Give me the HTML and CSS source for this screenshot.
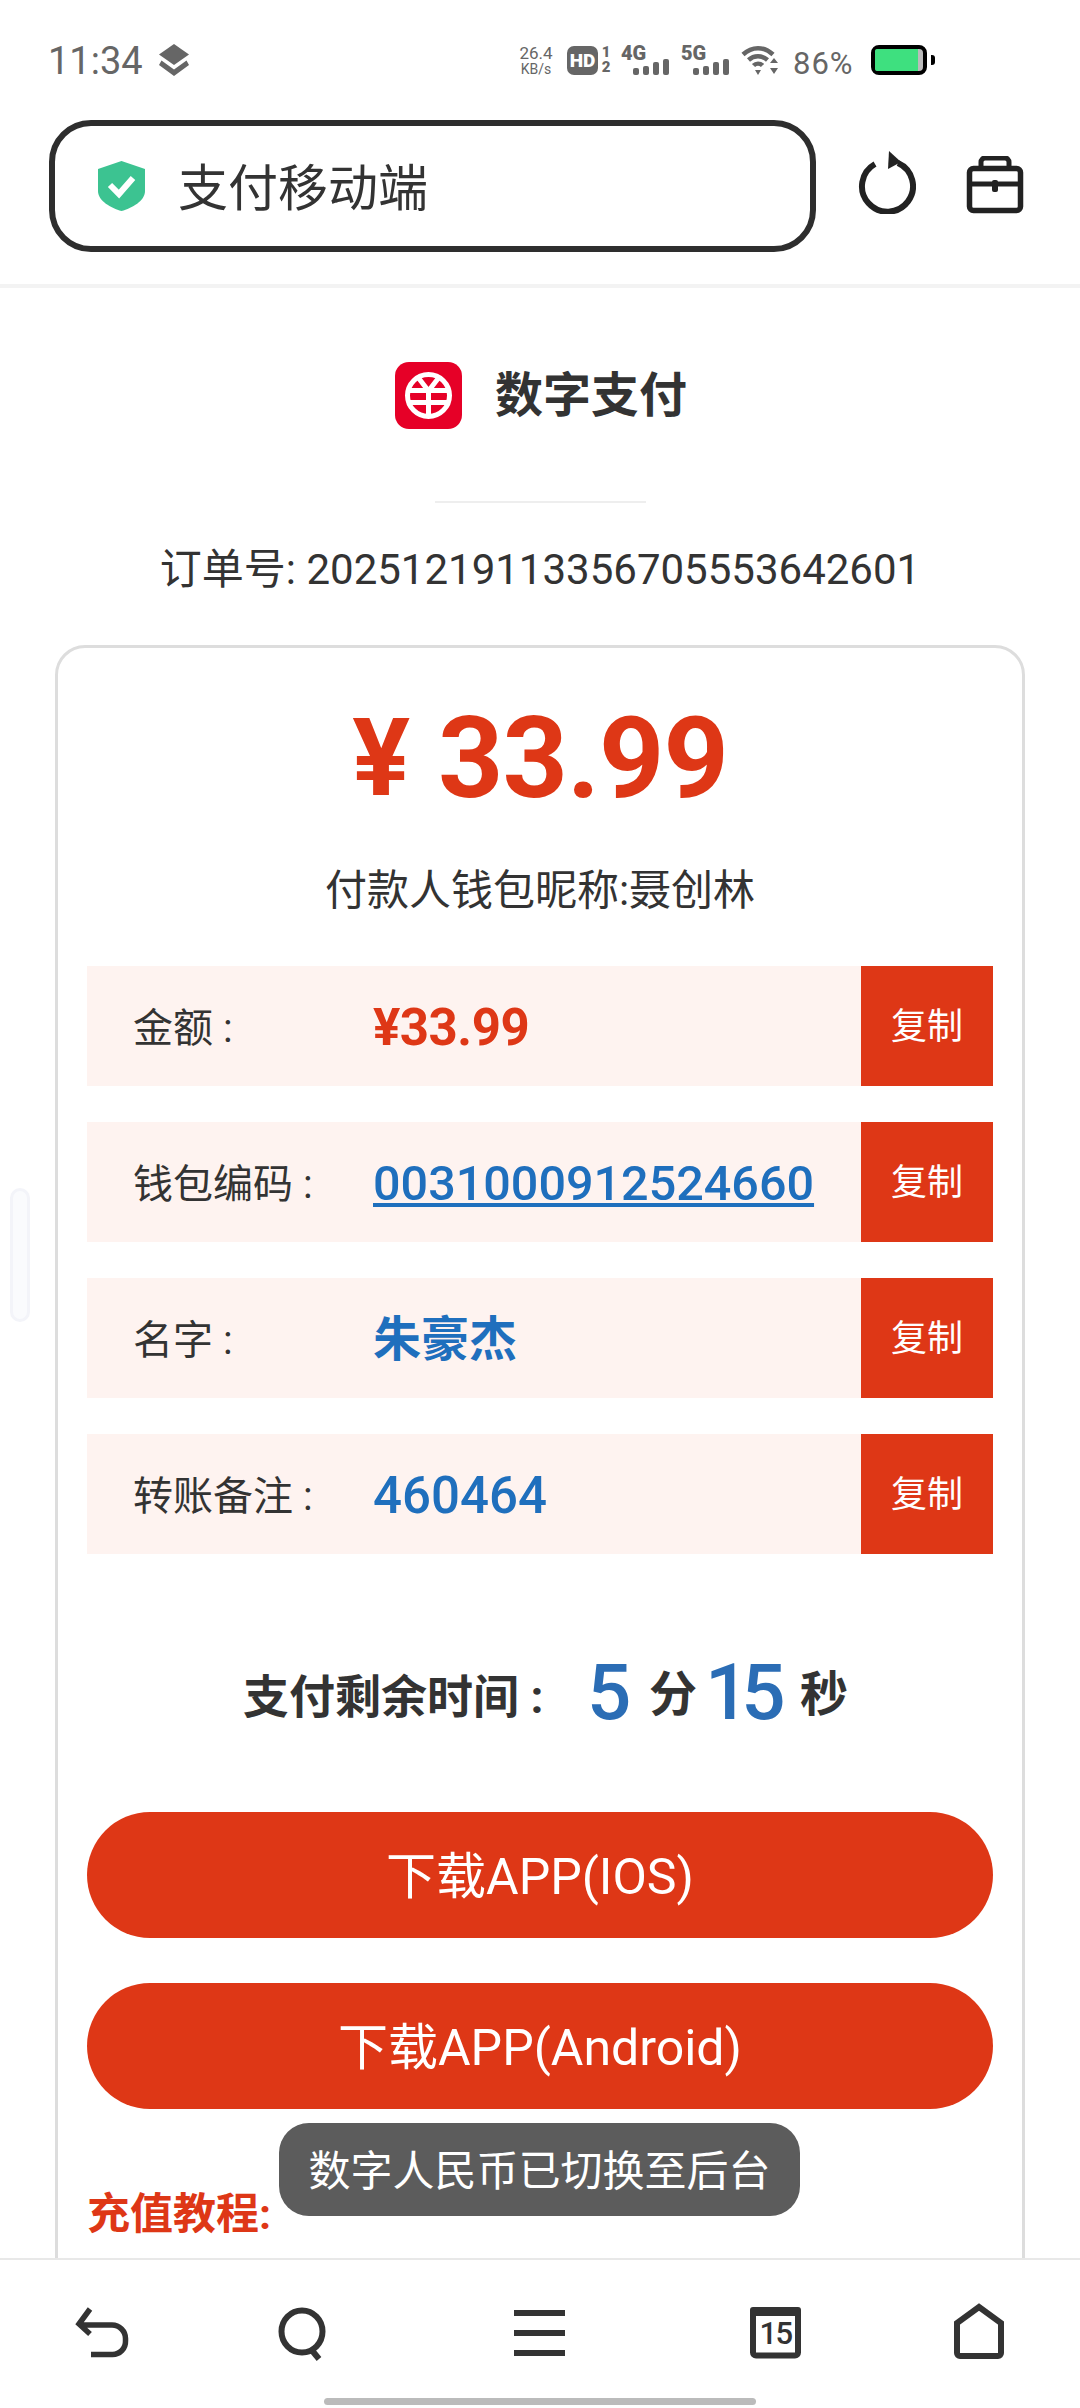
FILE: index.html
```html
<!DOCTYPE html>
<html lang="zh-CN">
<head>
<meta charset="utf-8">
<title>支付移动端</title>
<link rel="stylesheet" href="styles.css">
</head>
<body>
<div class="page">
  <div class="status">
    <span class="time">11:34</span>
    <svg class="stack" width="32" height="32" viewBox="0 0 32 32"><path d="M16 0 31 10.500 16 21 1 10.500Z" fill="#666"/><path d="M3.500 16.500 16 25.500 28.500 16.500 31 21 16 32 1 21Z" fill="#666"/></svg>
    <div class="status-right">
      <div class="speed"><span class="speed-num">26.4</span><span class="speed-unit">KB/s</span></div>
      <div class="hd">HD</div>
      <div class="sim"><span>1</span><span>2</span></div>
      <div class="net"><span class="net-label">4G</span>
        <svg width="36" height="16" viewBox="0 0 36 16"><g fill="#666"><rect x="0" y="9" width="6" height="7" rx="2"/><rect x="10" y="7" width="6" height="9" rx="2"/><rect x="20" y="3" width="6" height="13" rx="2"/><rect x="30" y="0" width="6" height="16" rx="2"/></g></svg></div>
      <div class="net net-five"><span class="net-label">5G</span>
        <svg width="36" height="16" viewBox="0 0 36 16"><g fill="#666"><rect x="0" y="9" width="6" height="7" rx="2"/><rect x="10" y="7" width="6" height="9" rx="2"/><rect x="20" y="3" width="6" height="13" rx="2"/><rect x="30" y="0" width="6" height="16" rx="2"/></g></svg></div>
      <svg class="wifi" width="37" height="30" viewBox="0 0 37 30"><g fill="none" stroke="#666" stroke-width="4.500"><path d="M2 9.500C11 1 23 1 32 9.500"/><path d="M7.500 15C13 10 21 10 26.500 15"/><path d="M12.500 20.500C15 18 19 18 21.500 20.500"/></g><path d="M14 25h6l-3 5Z" fill="#666"/><path d="M33 13l4 5h-8ZM33 29l4-6h-8Z" fill="#666"/></svg>
      <span class="percent">86%</span>
      <div class="battery"><div class="battery-fill"></div></div>
      <div class="battery-nub"></div>
    </div>
  </div>

  <header class="toolbar">
    <div class="urlbar">
      <svg class="shield" width="47" height="50" viewBox="0 0 47 50"><path d="M23.500 0 47 8V30C47 40 34 47 23.500 50 13 47 0 40 0 30V8Z" fill="#3cc391"/><path d="M12 24 21 33 35 17" fill="none" stroke="#fff" stroke-width="6"/></svg>
      <span class="url-text">支付移动端</span>
    </div>
    <svg class="tool-refresh" width="58" height="64" viewBox="0 0 58 64"><path d="M40 13A25.500 25.500 0 1 1 17 14" fill="none" stroke="#222" stroke-width="6"/><path d="M31 1 43 12 30 19Z" fill="#222"/></svg>
    <svg class="tool-box" width="58" height="58" viewBox="0 0 58 58"><path d="M15 13V6a4 4 0 0 1 4-4H39a4 4 0 0 1 4 4V13" fill="none" stroke="#222" stroke-width="5"/><rect x="3.500" y="12.500" width="51" height="42" rx="4" fill="none" stroke="#222" stroke-width="5.500"/><path d="M4 28H54" stroke="#222" stroke-width="5"/><rect x="26" y="24" width="6" height="12" rx="2" fill="#222"/></svg>
  </header>

  <main class="content">
    <div class="brand">
      <svg class="brand-logo" width="67" height="67" viewBox="0 0 67 67"><rect width="67" height="67" rx="14" fill="#e60027"/><circle cx="33.500" cy="33.500" r="21" fill="none" stroke="#fff" stroke-width="5"/><path d="M22 14 33.500 29 45 14M33.500 29V54M12 28.500H55M12 40.500H55" fill="none" stroke="#fff" stroke-width="5"/></svg>
      <span class="brand-name">数字支付</span>
    </div>
    <div class="divider"></div>
    <p class="order">订单号: 20251219113356705553642601</p>

    <section class="card">
      <div class="amount"><span class="amount-sign">¥</span><span class="amount-value">33.99</span></div>
      <p class="payer">付款人钱包昵称:聂创林</p>

      <div class="rows">
        <div class="row"><span class="row-label">金额 :</span><span class="row-value value-red">¥33.99</span><span class="copy">复制</span></div>
        <div class="row"><span class="row-label">钱包编码 :</span><a class="row-value value-link">0031000912524660</a><span class="copy">复制</span></div>
        <div class="row"><span class="row-label">名字 :</span><span class="row-value value-blue">朱豪杰</span><span class="copy">复制</span></div>
        <div class="row"><span class="row-label">转账备注 :</span><span class="row-value value-digits">460464</span><span class="copy">复制</span></div>
      </div>

      <div class="timer">
        <span class="timer-label">支付剩余时间 :</span>
        <span class="timer-num timer-min">5</span>
        <span class="timer-unit timer-unit-min">分</span>
        <span class="timer-num timer-sec">15</span>
        <span class="timer-unit timer-unit-sec">秒</span>
      </div>

      <div class="actions">
        <button class="action">下载APP(IOS)</button>
        <button class="action">下载APP(Android)</button>
      </div>

      <h3 class="tutorial">充值教程:</h3>
    </section>
  </main>

  <nav class="nav">
    <div class="nav-icons">
      <svg width="60" height="60" viewBox="0 0 60 60"><path d="M19 6 8 21 19 31M8 22H41a13.500 13.500 0 0 1 13.500 13.500V38A13 13 0 0 1 41.500 51.500H20" fill="none" stroke="#333" stroke-width="5.500"/></svg>
      <svg width="60" height="60" viewBox="0 0 60 60"><ellipse cx="29" cy="28.500" rx="20.500" ry="21" fill="none" stroke="#333" stroke-width="6"/><path d="M37 45 46 56" stroke="#333" stroke-width="6"/></svg>
      <svg width="60" height="60" viewBox="0 0 60 60"><g fill="#333"><rect x="4" y="7" width="51" height="6"/><rect x="4" y="27" width="51" height="6"/><rect x="4" y="47" width="51" height="6"/></g></svg>
      <svg width="60" height="60" viewBox="0 0 60 60"><rect x="8" y="7" width="45" height="45.500" rx="3" fill="none" stroke="#333" stroke-width="6"/><rect x="5" y="4" width="51" height="9" rx="3" fill="#333"/><text class="tab-count" x="30.500" y="41" text-anchor="middle">15</text></svg>
      <svg width="60" height="60" viewBox="0 0 60 60"><path d="M32 4 54 20V50a3 3 0 0 1-3 3H13a3 3 0 0 1-3-3V20Z" fill="none" stroke="#333" stroke-width="6"/></svg>
    </div>
    <div class="home-indicator"></div>
  </nav>

  <div class="toast">数字人民币已切换至后台</div>
  <div class="side-handle"></div>
</div>
</body>
</html>
```

FILE: styles.css
```css
* { box-sizing: border-box; }
html, body { margin: 0; padding: 0; background: #fff; }
body { font-family: Roboto, "Noto Sans CJK SC", sans-serif; color: #333; }
p, h3 { margin: 0; font-weight: inherit; }

.page {
  position: relative;
  width: 1080px;
  height: 2408px;
  overflow: hidden;
  display: flex;
  flex-direction: column;
  background: #fff;
}

/* status bar */
.status {
  height: 120px;
  flex: none;
  display: flex;
  align-items: center;
  padding-left: 48px;
  color: #666;
}
.time { font-size: 38px; line-height: 40px; width: 110px; padding-top: 2px; }
.stack { flex: none; }
.status-right {
  margin-left: 327px;
  display: flex;
  align-items: center;
  height: 34px;
}
.speed { width: 38px; display: flex; flex-direction: column; align-items: center; margin-right: 12px; }
.speed-num { font-size: 17px; line-height: 17px; }
.speed-unit { font-size: 14px; line-height: 14px; }
.hd {
  width: 31px; height: 29px; border-radius: 7px; background: #666; color: #fff;
  font-size: 19px; font-weight: 900; line-height: 29px; text-align: center;
}
.sim { width: 12px; margin-left: 2px; display: flex; flex-direction: column; align-items: center; font-size: 15px; font-weight: 900; line-height: 15px; }
.net { position: relative; width: 47px; height: 30px; margin-left: 9px; }
.net-five { margin-left: 13px; }
.net-label { position: absolute; left: 0; top: -2px; font-size: 20px; line-height: 20px; font-weight: 900; }
.net svg { position: absolute; left: 12px; top: 14px; }
.wifi { margin-left: 13px; flex: none; }
.percent { margin-left: 15px; width: 62px; padding-top: 7px; font-size: 31px; letter-spacing: 1px; line-height: 34px; white-space: nowrap; }
.battery {
  margin-left: 16px; width: 56px; height: 30px; border: 4px solid #000; border-radius: 8px;
  background: #bbb; padding-right: 5px;
}
.battery-fill { height: 100%; background: #3ee07f; border-radius: 2px 0 0 2px; }
.battery-nub { width: 4px; height: 10px; margin-left: 4px; background: #000; border-radius: 0 3px 3px 0; }

/* toolbar */
.toolbar {
  flex: none;
  height: 168px;
  display: flex;
  align-items: flex-start;
  padding-left: 49px;
  border-bottom: 4px solid #f3f3f3;
}
.urlbar {
  width: 767px; height: 132px;
  border: 6px solid #2e2e2e; border-radius: 42px;
  display: flex; align-items: center; padding-left: 43px;
}
.url-text { margin-left: 33px; padding-top: 6px; font-size: 50px; line-height: 60px; color: #333; }
.tool-refresh { margin-left: 42px; margin-top: 30px; flex: none; }
.tool-box { margin-left: 50px; margin-top: 36px; flex: none; }

/* content */
.content { flex: 1; min-height: 0; overflow: hidden; }
.brand { display: flex; align-items: center; justify-content: center; margin-top: 74px; padding-left: 2px; }
.brand-name { margin-left: 33px; font-size: 48px; font-weight: 700; line-height: 67px; color: #333; }
.divider { width: 211px; height: 2px; margin: 72px auto 0; background: #eee; }
.order { margin-top: 39px; text-align: center; font-size: 42px; line-height: 56px; color: #333; }

.card {
  width: 970px; height: 1700px;
  margin: 47px 0 0 55px;
  padding: 0 29px;
  border: 3px solid #ddd; border-radius: 30px;
}
.amount { margin-top: 50px; height: 120px; display: flex; align-items: center; justify-content: center; color: #de3716; }
.amount-sign { font-size: 108px; font-weight: 700; line-height: 120px; margin-right: 28px; }
.amount-value { font-size: 114px; font-weight: 700; line-height: 120px; letter-spacing: -1px; }
.payer { margin-top: 45px; text-align: center; font-size: 42px; line-height: 56px; color: #333; }

.rows { margin-top: 47px; display: flex; flex-direction: column; gap: 36px; }
.row { height: 120px; display: flex; align-items: center; background: #fef3f0; padding-left: 46px; }
.row-label { width: 240px; padding-top: 6px; font-size: 40px; line-height: 56px; color: #333; white-space: nowrap; }
.row-value { flex: 1; padding-top: 3px; font-size: 48.500px; font-weight: 500; line-height: 60px; white-space: nowrap; }
.value-red { color: #de3716; font-weight: 700; font-size: 51px; letter-spacing: -0.500px; }
.value-blue { color: #1f6fbd; font-weight: 700; font-size: 48px; }
.value-digits { color: #1f6fbd; font-weight: 500; font-size: 51px; }
.value-link { color: #1f6fbd; text-decoration: underline; }
.copy {
  width: 132px; height: 120px; flex: none; background: #de3716; color: #fff;
  font-size: 36px; line-height: 122px; text-align: center;
}

.timer { margin-top: 99px; height: 80px; display: flex; align-items: center; padding-left: 156px; }
.timer-label { width: 344px; font-size: 46px; font-weight: 700; white-space: nowrap; color: #333; }
.timer-num { font-size: 78px; font-weight: 500; line-height: 80px; color: #2b6db5; }
.timer-min { width: 62px; }
.timer-unit { padding-top: 4px; font-size: 48px; font-weight: 700; line-height: 80px; color: #333; }
.timer-unit-min { width: 56px; }
.timer-sec { width: 95px; letter-spacing: -8px; }

.actions { margin-top: 79px; display: flex; flex-direction: column; gap: 45px; }
.action {
  height: 126px; border: 0; border-radius: 63px; background: #de3716; color: #fff;
  font-family: inherit; font-size: 50px; padding: 0 0 6px;
}
.tutorial { margin-top: 77px; font-size: 43px; font-weight: 700; line-height: 56px; color: #de3716; }

/* bottom navigation */
.nav { flex: none; height: 150px; background: #fff; border-top: 2px solid #e8e8e8; position: relative; z-index: 1; }
.nav-icons {
  display: grid;
  grid-template-columns: 202px 202px 272px 198px 206px;
  justify-items: center;
  padding-top: 43px;
  height: 103px;
}
.tab-count { font-family: Roboto, sans-serif; font-size: 31px; font-weight: 500; fill: #333; letter-spacing: -1.500px; }
.home-indicator { width: 432px; height: 7px; margin: 35px auto 0; border-radius: 4px; background: #bbb; }

/* overlays */
.toast {
  position: absolute; left: 279px; top: 2123px; z-index: 2;
  width: 521px; height: 93px; border-radius: 30px; background: #5c5c5c;
  color: #fff; font-size: 42px; line-height: 97px; text-align: center; white-space: nowrap;
}
.side-handle {
  position: absolute; left: 10px; top: 1188px; width: 20px; height: 134px;
  border: 3px solid #f3f4f9; border-radius: 10px; background: #fafbfd;
}
```
